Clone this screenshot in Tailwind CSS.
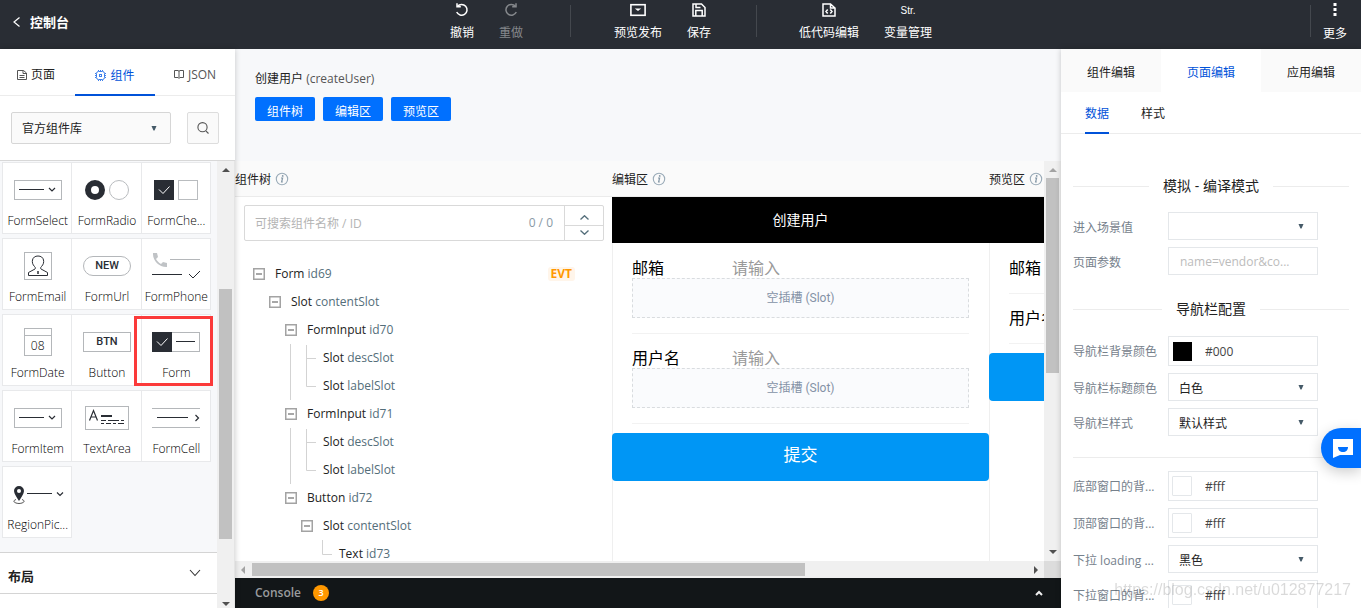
<!DOCTYPE html>
<html lang="zh-CN">
<head>
<meta charset="utf-8">
<meta name="viewport" content="width=device-width, initial-scale=1">
<title>控制台</title>
<script src="https://cdn.jsdelivr.net/npm/@tailwindcss/browser@4"></script>
</head>
<body class="flex h-screen flex-col overflow-hidden bg-white font-['Open_Sans','Noto_Sans_CJK_SC',sans-serif] text-[12px] leading-4 text-[#222]">

<svg class="hidden" aria-hidden="true">
  <symbol id="info" viewBox="0 0 14 14"><circle cx="7" cy="7" r="5.7" fill="none" stroke="#9aabb8" stroke-width="1.1"/><path d="M6 6h1.6l-1 4h1.2" fill="none" stroke="#8497a6" stroke-width="1.2"/><circle cx="7.7" cy="3.9" r=".9" fill="#8497a6"/></symbol>
  <symbol id="minus" viewBox="0 0 12 12"><rect x=".75" y=".75" width="10.5" height="10.5" fill="none" stroke="#a3a3a3" stroke-width="1.5"/><path d="M3 6h6" stroke="#777" stroke-width="1.3"/></symbol>
  <symbol id="tee" viewBox="0 0 10 28"><path d="M.5 1v27M.5 14.5H10" fill="none" stroke="#d3d3d3"/></symbol>
  <symbol id="ell" viewBox="0 0 10 28"><path d="M.5 0v14.500H10" fill="none" stroke="#d3d3d3"/></symbol>
  <symbol id="caret" viewBox="0 0 6 5"><path d="M.5 0h5L3.500 4.500h-1z" fill="#455a68"/></symbol>
  <symbol id="up" viewBox="0 0 8 4"><path d="M0 4L4 0l4 4z" fill="currentColor"/></symbol>
  <symbol id="down" viewBox="0 0 8 4"><path d="M0 0h8L4 4z" fill="currentColor"/></symbol>
  <symbol id="pick" viewBox="0 0 48 20"><rect x=".5" y=".5" width="47" height="19" fill="#fff" stroke="#b4b7ba"/><path d="M5 9.500h25" stroke="#292d34"/><path d="M35 8l3 3 3-3" fill="none" stroke="#292d34" stroke-width="1.2"/></symbol>
</svg>

<header class="flex h-[49px] shrink-0 items-start bg-[#292d34] text-white">
  <a href="#" class="flex w-[450px] items-center gap-[10px] pt-[14px] pl-[13px] text-[13px] font-bold">
    <svg class="h-[10px] w-[7px]" viewBox="0 0 7 10" fill="none" stroke="#fff" stroke-width="1.2"><path d="M6.500 .5L1 5l5.500 4.500"/></svg>控制台</a>
  <nav class="flex gap-[25px] pt-[3px]" aria-label="工具栏">
    <button class="flex flex-col items-center gap-2">
      <svg class="h-[14px] w-[16px]" viewBox="0 0 16 14" fill="none" stroke="#fff" stroke-width="1.5"><path d="M3.500 3.300A5.400 5.400 0 1 1 2.700 9"/><path d="M3 .3v3.500h3.800"/></svg>撤销</button>
    <button class="flex flex-col items-center gap-2 text-[#85888c]">
      <svg class="h-[14px] w-[16px]" viewBox="0 0 16 14" fill="none" stroke="currentColor" stroke-width="1.5"><path d="M12.500 3.300A5.400 5.400 0 1 0 13.300 9"/><path d="M13 .3v3.500H9.200"/></svg>重做</button>
    <span class="mt-[2px] mr-[18px] ml-[22px] h-8 w-px bg-[#44484e]"></span>
    <button class="flex flex-col items-center gap-2">
      <svg class="h-[14px] w-[16px]" viewBox="0 0 16 14" fill="none" stroke="#fff" stroke-width="1.600"><rect x=".9" y="1.700" width="14.200" height="10.600"/><path d="M4.800 5.500l3.200 2.600 3.200-2.600z" fill="#fff" stroke="none"/></svg>预览发布</button>
    <button class="flex flex-col items-center gap-2">
      <svg class="h-[14px] w-[14px]" viewBox="0 0 14 14" fill="none" stroke="#fff" stroke-width="1.500"><path d="M1 1h8.500L13 4.500V13H1zM3.800 13V7.500h6.400V13M4 1v3.500h4.500"/></svg>保存</button>
    <span class="mt-[2px] mr-[17px] ml-5 h-8 w-px bg-[#44484e]"></span>
    <button class="flex flex-col items-center gap-2">
      <svg class="h-[14px] w-[14px]" viewBox="0 0 14 14" fill="none" stroke="#fff" stroke-width="1.500"><path d="M1 1h7.500L13 5v8H1zM8.500 1v4H13M5.700 6.500L4 8.500l1.700 2M8.300 6.500l1.700 2-1.700 2"/></svg>低代码编辑</button>
    <button class="flex flex-col items-center gap-2"><span class="h-[14px] font-['Liberation_Sans',sans-serif] text-[10px]">Str.</span>变量管理</button>
  </nav>
  <div class="ml-auto flex gap-[12px] pr-[14px]">
    <span class="mt-[5px] h-8 w-px bg-[#44484e]"></span>
    <button class="flex flex-col items-center gap-[9px] pt-[3px]">
      <svg class="h-[14px] w-1" viewBox="0 0 4 14" fill="#fff"><rect x=".5" y="0" width="3" height="3"/><rect x=".5" y="5" width="3" height="3"/><rect x=".5" y="10" width="3" height="3"/></svg>更多</button>
  </div>
</header>

<div class="flex min-h-0 flex-1">
  <!-- Component library -->
  <aside class="z-10 flex w-[235px] shrink-0 flex-col bg-white shadow-[0_0_6px_rgba(0,0,0,0.2)]">
    <div class="flex h-[47px] shrink-0 border-b border-[#ececec]" role="tablist">
      <button role="tab" class="flex w-[75px] items-center justify-center gap-1 pt-[6px] pr-[3px]">
        <svg class="h-[10px] w-[10px]" viewBox="0 0 10 10" fill="none" stroke="#555"><path d="M.5.5H6.500L9.500 3v6.500h-9zM6 .5v3h3.500M2.500 5.500h5M2.500 7.500h5"/></svg>页面</button>
      <button role="tab" aria-selected="true" class="-mb-px flex w-20 items-center justify-center gap-1 border-b-2 border-[#0052d9] pt-[8px] text-[#0052d9]">
        <svg class="h-[11px] w-[11px]" viewBox="0 0 11 11" fill="none" stroke="#3f80ea"><rect x="1.500" y="1.500" width="8" height="8" rx="2"/><rect x="4.500" y="4.500" width="2" height="2"/><path d="M3.500 0v1M5.500 0v1M7.500 0v1M3.500 10v1M5.500 10v1M7.500 10v1M0 3.500h1M0 5.500h1M0 7.500h1M10 3.500h1M10 5.500h1M10 7.500h1"/></svg>组件</button>
      <button role="tab" class="flex w-20 items-center justify-center gap-1 pt-[5px] text-[#555]">
        <svg class="h-[9px] w-[10px]" viewBox="0 0 10 9" fill="none" stroke="#555"><path d="M.5.5H4l1 .7 1-.7h3.500v7H6l-1 1-1-1H.5zM5 1v7"/></svg>JSON</button>
    </div>
    <div class="flex h-[65px] shrink-0 gap-4 border-b border-[#d8d8d8] px-[11px] pt-4 pr-4">
      <div class="relative h-8 flex-1">
        <select aria-label="组件库" class="h-8 w-full appearance-none rounded-[2px] border border-[#d6d6d6] bg-[#fafafa] px-[10px] pt-[2px]"><option>官方组件库</option></select>
        <svg class="pointer-events-none absolute top-[14px] right-[14px] h-[5px] w-[6px]"><use href="#caret"/></svg>
      </div>
      <button aria-label="搜索" class="flex h-8 w-8 items-center justify-center rounded-[2px] border border-[#ddd] bg-[#fafafa]">
        <svg class="h-3 w-3" viewBox="0 0 12 12" fill="none" stroke="#555" stroke-width="1.100"><circle cx="5.500" cy="5.200" r="4.600"/><path d="M8.800 8.800l2.700 2.700"/></svg></button>
    </div>
    <div class="flex min-h-0 flex-1">
      <div class="flex-1 overflow-hidden bg-[#f7f8fa]">
        <div class="grid grid-cols-3 gap-y-1 pt-px pr-[7px] pl-[2px] pb-[14px] text-center font-light text-black">
          <button class="-mr-px flex h-[72px] flex-col items-center border border-[#e8e9eb] bg-white pt-[17px] pl-px"><svg class="h-5 w-12"><use href="#pick"/></svg><span class="mt-[13px]">FormSelect</span></button>
          <button class="-mr-px flex h-[72px] flex-col items-center border border-[#e8e9eb] bg-white pt-[17px] pl-px"><svg class="h-5 w-11" viewBox="0 0 44 20" fill="none"><circle cx="10" cy="10" r="7" stroke="#292d34" stroke-width="6"/><circle cx="34" cy="10" r="9.500" stroke="#b9bcbf"/></svg><span class="mt-[13px]">FormRadio</span></button>
          <button class="-mr-px flex h-[72px] flex-col items-center border border-[#e8e9eb] bg-white pt-[17px] pl-px"><svg class="h-5 w-11" viewBox="0 0 44 20" fill="none"><path d="M0 0h20v20H0z" fill="#292d34"/><path d="M5 9.500l4 4 6.500-7" stroke="#fff"/><rect x="24.500" y=".5" width="19" height="19" stroke="#b9bcbf"/></svg><span class="mt-[13px]">FormChe...</span></button>

          <button class="-mr-px flex h-[72px] flex-col items-center border border-[#e8e9eb] bg-white pt-[13px] pl-px"><svg class="h-7 w-7" viewBox="0 0 28 28" fill="none" stroke="#292d34"><rect x=".5" y=".5" width="27" height="27" stroke="#b4b7ba"/><path d="M4.500 23.500v-3l6.500-3.500c.8-.8.300-1.700-.5-2.500C8.500 12.500 8 10 8.500 8c.5-2.500 2.500-4 5.500-4s5 1.500 5.500 4c.5 2 0 4.500-2 6.500-.8.8-1.300 1.700-.5 2.500l6.500 3.500v3z"/><path d="M14 19v3" stroke-width="1.500"/></svg><span class="mt-[9px]">FormEmail</span></button>
          <button class="-mr-px flex h-[72px] flex-col items-center border border-[#e8e9eb] bg-white pt-[17px] pl-px"><span class="flex h-5 w-12 items-center justify-center rounded-full border border-[#b4b7ba] font-['Roboto',sans-serif] text-[11px] font-medium text-[#292d34]">NEW</span><span class="mt-[13px]">FormUrl</span></button>
          <button class="-mr-px flex h-[72px] flex-col items-center border border-[#e8e9eb] bg-white pt-[14px] pl-px"><svg class="h-[26px] w-12" viewBox="0 0 48 26" fill="none"><path d="M1 0h4l1 4-2 2c1.300 2.300 2.700 3.700 5 5l2-2 4 1v4C7.500 14.500.5 8 1 0z" fill="#c0c3c6"/><path d="M18 6.500h30" stroke="#b4b7ba"/><path d="M0 21.500h30M37 21l4 4 7-7" stroke="#292d34"/></svg><span class="mt-[10px]">FormPhone</span></button>

          <button class="-mr-px flex h-[72px] flex-col items-center border border-[#e8e9eb] bg-white pt-[13px] pl-px"><span class="flex h-7 w-7 flex-col border border-[#b4b7ba]"><span class="h-[7px] border-b border-[#b4b7ba]"></span><span class="pt-[2px]">08</span></span><span class="mt-[9px]">FormDate</span></button>
          <button class="-mr-px flex h-[72px] flex-col items-center border border-[#e8e9eb] bg-white pt-[17px] pl-px"><span class="flex h-5 w-12 items-center justify-center border border-[#b4b7ba] font-['Roboto',sans-serif] text-[11px] font-medium text-[#292d34]">BTN</span><span class="mt-[13px]">Button</span></button>
          <button class="relative -mr-px flex h-[72px] flex-col items-center border border-[#e8e9eb] bg-white pt-[17px] pl-px"><svg class="h-5 w-12" viewBox="0 0 48 20" fill="none"><rect x=".5" y=".5" width="47" height="19" stroke="#b4b7ba"/><path d="M0 0h20v20H0z" fill="#292d34"/><path d="M5 9.500l4 4 6.500-7" stroke="#fff"/><path d="M24 9.500h19" stroke="#292d34"/></svg><span class="mt-[13px]">Form</span><span class="absolute top-px -right-[3px] h-[70px] w-[79px] border-3 border-[#fb3a3a]"></span></button>

          <button class="-mr-px flex h-[72px] flex-col items-center border border-[#e8e9eb] bg-white pt-[17px] pl-px"><svg class="h-5 w-12"><use href="#pick"/></svg><span class="mt-[13px]">FormItem</span></button>
          <button class="-mr-px flex h-[72px] flex-col items-center border border-[#e8e9eb] bg-white pt-[15px] pl-px"><svg class="h-6 w-11" viewBox="0 0 44 24" fill="none" stroke="#292d34"><rect x=".5" y=".5" width="43" height="23" stroke="#b4b7ba"/><path d="M4.500 14.500l4-10 4 10M6 11h5" stroke-width="1.200"/><path d="M16 10h11" stroke-width="2"/><path d="M16 14.500h5m2 0h11m2 0h3M16 17.500h3m2 0h5m2 0h3m2 0h6"/></svg><span class="mt-[11px]">TextArea</span></button>
          <button class="-mr-px flex h-[72px] flex-col items-center border border-[#e8e9eb] bg-white pt-[17px] pl-px"><svg class="h-5 w-12" viewBox="0 0 48 20" fill="none"><path d="M0 .5h48M0 19.500h48" stroke="#b4b7ba"/><path d="M5 9.500h31" stroke="#292d34"/><path d="M43.500 7l3 3-3 3" stroke="#292d34" stroke-width="1.200"/></svg><span class="mt-[13px]">FormCell</span></button>

          <button class="-mr-px flex h-[72px] flex-col items-center border border-[#e8e9eb] bg-white pt-[18px] pl-px"><svg class="h-5 w-[52px]" viewBox="0 0 52 20" fill="none"><path d="M7 1a5 5 0 0 0-5 5c0 3 3 6.500 5 10 2-3.500 5-7 5-10a5 5 0 0 0-5-5z" fill="#292d34"/><circle cx="7" cy="6" r="2" fill="#fff"/><path d="M4 14.500c-5 2 0 4 3 4s8-2 3-4" stroke="#555"/><path d="M15 8.500h25" stroke="#292d34"/><path d="M45 7.500l3 3 3-3" stroke="#292d34" stroke-width="1.200"/></svg><span class="mt-[12px]">RegionPic...</span></button>
        </div>
        <button class="flex h-[42px] w-full items-center justify-between border-y border-[#d4d4d4] bg-white px-2 pt-[5px] text-[13px] font-bold">布局
          <svg class="mr-2 mb-[6px] h-2 w-3" viewBox="0 0 12 8" fill="none" stroke="#333" stroke-width="1.100"><path d="M1 1l5 5.500L11 1"/></svg></button>
        <div class="h-5 bg-white"></div>
      </div>
      <div class="flex w-[17px] flex-col items-center bg-[#f0f0f0] text-[#505050]">
        <svg class="mt-[7px] h-1 w-2 shrink-0"><use href="#up"/></svg>
        <span class="mt-[117px] h-[250px] w-[13px] bg-[#c1c1c1]"></span>
        <svg class="mt-auto mb-[2px] h-1 w-2"><use href="#down"/></svg>
      </div>
      <div class="w-px bg-[#e4e4e4]"></div>
    </div>
  </aside>

  <!-- Workspace -->
  <main class="flex min-w-0 flex-1 flex-col bg-[#f7f8fa]">
    <div class="h-28 shrink-0 pt-[22px] pl-5">
      <h1>创建用户 <span class="text-[#555]">(createUser)</span></h1>
      <div class="mt-[10px] flex gap-2 text-white">
        <button class="h-6 rounded-[2px] bg-[#0070ff] px-3 pt-[5px]">组件树</button>
        <button class="h-6 rounded-[2px] bg-[#0070ff] px-3 pt-[5px]">编辑区</button>
        <button class="h-6 rounded-[2px] bg-[#0070ff] px-3 pt-[5px]">预览区</button>
      </div>
    </div>
    <div class="flex min-h-0 flex-1">
      <div class="flex min-w-0 flex-1 overflow-hidden bg-white">
        <section class="w-[377px] shrink-0">
          <h2 class="flex h-9 items-center gap-1 border-b border-[#ebebeb] bg-[#fafafa] pt-[2px]">组件树 <svg class="mb-[2px] h-[14px] w-[14px]"><use href="#info"/></svg></h2>
          <div class="mt-2 mr-2 ml-[9px] flex h-9 rounded-[2px] border border-[#d9d9d9]">
            <input aria-label="搜索组件" placeholder="可搜索组件名称 / ID" class="min-w-0 flex-1 pt-px pl-[10px] outline-none placeholder:text-[#b4b4b4]">
            <span class="flex items-center pr-[11px] text-[#8a9aa6]">0 / 0</span>
            <div class="flex w-[39px] flex-col divide-y divide-[#d9d9d9] border-l border-[#d9d9d9]">
              <button aria-label="上一个" class="flex flex-1 items-center justify-center pt-1"><svg class="h-[5px] w-[9px]" viewBox="0 0 9 5" fill="none" stroke="#546e7a" stroke-width="1.300"><path d="M.5 4.500l4-3.800 4 3.800"/></svg></button>
              <button aria-label="下一个" class="flex flex-1 items-center justify-center"><svg class="h-[5px] w-[9px]" viewBox="0 0 9 5" fill="none" stroke="#546e7a" stroke-width="1.300"><path d="M.5.5l4 3.800 4-3.800"/></svg></button>
            </div>
          </div>
          <ul class="pt-[19px] pl-[18px] leading-7">
            <li>
              <div class="flex items-center gap-[10px]"><svg class="h-3 w-3"><use href="#minus"/></svg><span>Form <span class="text-[#546e7a]">id69</span></span><span class="mr-[37px] ml-auto rounded-[3px] bg-[#fff5ea] px-[3px] text-[12px] leading-[14px] font-bold text-[#ff9800]">EVT</span></div>
              <ul class="pl-4">
                <li>
                  <div class="flex items-center gap-[10px]"><svg class="h-3 w-3"><use href="#minus"/></svg><span>Slot <span class="text-[#546e7a]">contentSlot</span></span></div>
                  <ul class="pl-4">
                    <li>
                      <div class="flex items-center gap-[10px]"><svg class="h-3 w-3"><use href="#minus"/></svg><span>FormInput <span class="text-[#546e7a]">id70</span></span></div>
                      <ul class="ml-[5px] border-l border-[#d3d3d3] pl-[15px]">
                        <li class="flex gap-[7px]"><svg class="h-7 w-[10px]"><use href="#tee"/></svg><span>Slot <span class="text-[#546e7a]">descSlot</span></span></li>
                        <li class="flex gap-[7px]"><svg class="h-7 w-[10px]"><use href="#ell"/></svg><span>Slot <span class="text-[#546e7a]">labelSlot</span></span></li>
                      </ul>
                    </li>
                    <li>
                      <div class="flex items-center gap-[10px]"><svg class="h-3 w-3"><use href="#minus"/></svg><span>FormInput <span class="text-[#546e7a]">id71</span></span></div>
                      <ul class="ml-[5px] border-l border-[#d3d3d3] pl-[15px]">
                        <li class="flex gap-[7px]"><svg class="h-7 w-[10px]"><use href="#tee"/></svg><span>Slot <span class="text-[#546e7a]">descSlot</span></span></li>
                        <li class="flex gap-[7px]"><svg class="h-7 w-[10px]"><use href="#ell"/></svg><span>Slot <span class="text-[#546e7a]">labelSlot</span></span></li>
                      </ul>
                    </li>
                    <li>
                      <div class="flex items-center gap-[10px]"><svg class="h-3 w-3"><use href="#minus"/></svg><span>Button <span class="text-[#546e7a]">id72</span></span></div>
                      <ul class="pl-4">
                        <li>
                          <div class="flex items-center gap-[10px]"><svg class="h-3 w-3"><use href="#minus"/></svg><span>Slot <span class="text-[#546e7a]">contentSlot</span></span></div>
                          <ul class="pl-[21px]">
                            <li class="flex gap-[7px]"><svg class="h-7 w-[10px]"><use href="#ell"/></svg><span>Text <span class="text-[#546e7a]">id73</span></span></li>
                          </ul>
                        </li>
                      </ul>
                    </li>
                  </ul>
                </li>
              </ul>
            </li>
          </ul>
        </section>

        <section class="w-[377px] shrink-0">
          <h2 class="flex h-9 items-center gap-1 border-b border-[#ebebeb] bg-[#fafafa] pt-[2px]">编辑区 <svg class="mb-[2px] h-[14px] w-[14px]"><use href="#info"/></svg></h2>
          <div class="flex h-[46px] items-center justify-center bg-black text-[14px] text-white">创建用户</div>
          <div class="h-full border-l border-[#efefef]">
            <div class="-ml-px px-5 pt-[15px]">
              <label class="flex h-5 items-center text-[16px] text-black"><span class="w-[100px]">邮箱</span><input placeholder="请输入" class="min-w-0 flex-1 outline-none placeholder:text-[#999]"></label>
              <div class="flex h-10 items-center justify-center border border-dashed border-[#d9dcdf] bg-[#fafbfd] font-['Roboto','Noto_Sans_CJK_SC',sans-serif] text-[#8492a6]">空插槽 (Slot)</div>
              <div class="mt-[15px] mb-[14px] h-px bg-[#f2f2f2]"></div>
              <label class="flex h-5 items-center text-[16px] text-black"><span class="w-[100px]">用户名</span><input placeholder="请输入" class="min-w-0 flex-1 outline-none placeholder:text-[#999]"></label>
              <div class="flex h-10 items-center justify-center border border-dashed border-[#d9dcdf] bg-[#fafbfd] font-['Roboto','Noto_Sans_CJK_SC',sans-serif] text-[#8492a6]">空插槽 (Slot)</div>
              <div class="mt-[15px] mb-[9px] h-px bg-[#f2f2f2]"></div>
            </div>
            <button class="-ml-px h-12 w-[377px] rounded-[4px] bg-[#0096f5] pb-1 text-[17px] text-white">提交</button>
          </div>
        </section>

        <section class="w-[377px] shrink-0">
          <h2 class="flex h-9 items-center gap-1 border-b border-[#ebebeb] bg-[#fafafa] pt-[2px]">预览区 <svg class="mb-[2px] h-[14px] w-[14px]"><use href="#info"/></svg></h2>
          <div class="flex h-[46px] items-center justify-center bg-black text-[14px] text-white">创建用户</div>
          <div class="h-full border-l border-[#efefef]">
            <div class="-ml-px px-5 pt-[15px]">
              <label class="flex h-5 items-center text-[16px] text-black"><span class="w-[100px]">邮箱</span><input placeholder="请输入" class="min-w-0 flex-1 outline-none placeholder:text-[#999]"></label>
              <div class="mt-[15px] mb-[14px] h-px bg-[#f2f2f2]"></div>
              <label class="flex h-5 items-center text-[16px] text-black"><span class="w-[100px]">用户名</span><input placeholder="请输入" class="min-w-0 flex-1 outline-none placeholder:text-[#999]"></label>
              <div class="mt-[15px] mb-[9px] h-px bg-[#f2f2f2]"></div>
            </div>
            <button class="-ml-px h-12 w-[377px] rounded-[4px] bg-[#0096f5] pb-1 text-[17px] text-white">提交</button>
          </div>
        </section>
      </div>
      <div class="flex w-[17px] shrink-0 flex-col items-center bg-[#f0f0f0]">
        <svg class="mt-[7px] h-1 w-2 shrink-0 text-[#a3a3a3]"><use href="#up"/></svg>
        <span class="mt-[6px] h-[195px] w-[13px] bg-[#c1c1c1]"></span>
        <svg class="mt-auto mb-[7px] h-1 w-2 text-[#505050]"><use href="#down"/></svg>
      </div>
    </div>
    <div class="flex h-[17px] shrink-0 items-center bg-[#f0f0f0]">
      <svg class="mr-[7px] ml-[6px] h-2 w-1" viewBox="0 0 4 8"><path d="M4 0v8L0 4z" fill="#a3a3a3"/></svg>
      <span class="h-[13px] w-[67%] bg-[#c1c1c1]"></span>
      <svg class="mr-[6px] ml-auto h-2 w-1" viewBox="0 0 4 8"><path d="M0 0l4 4-4 4z" fill="#505050"/></svg>
      <span class="h-full w-[17px] bg-[#dcdcdc]"></span>
    </div>
    <button class="flex h-[30px] shrink-0 items-center bg-[#121618] px-5 font-semibold text-[#9a9c9e]">Console
      <span class="ml-3 flex h-4 w-4 items-center justify-center rounded-full bg-[#ff9800] text-[9px] text-white">3</span>
      <svg class="mr-[-2px] ml-auto h-[6px] w-2" viewBox="0 0 8 6" fill="none" stroke="#eee" stroke-width="2"><path d="M1 5l3-3 3 3"/></svg></button>
  </main>

  <!-- Page properties -->
  <aside class="z-10 w-[300px] shrink-0 overflow-hidden bg-white shadow-[0_0_6px_rgba(0,0,0,0.2)]">
    <div class="grid h-[43px] grid-cols-3 bg-[#fafafa]" role="tablist">
      <button role="tab" class="pt-[5px]">组件编辑</button>
      <button role="tab" aria-selected="true" class="bg-white pt-[5px] text-[#0052d9]">页面编辑</button>
      <button role="tab" class="pt-[5px]">应用编辑</button>
    </div>
    <div class="flex h-[42px] gap-8 border-b border-[#ececec] pl-6" role="tablist">
      <button role="tab" aria-selected="true" class="-mb-px border-b-2 border-[#0052d9] pt-1 text-[#0052d9]">数据</button>
      <button role="tab" class="pt-[3px]">样式</button>
    </div>
    <form class="px-3 pt-[42px] text-[#222]">
      <h3 class="flex h-5 items-center gap-[14px] text-[14px] before:h-px before:flex-1 before:bg-[#ececec] after:h-px after:flex-1 after:bg-[#ececec]">模拟 - 编译模式</h3>
      <div class="mt-4 flex flex-col gap-[7px] pr-[31px]">
        <div class="flex items-center"><label for="scene" class="w-[95px] pt-[3px] text-[#76818c]">进入场景值</label>
          <div class="relative flex-1"><select id="scene" class="block h-7 w-full appearance-none border border-[#e4e7ea] px-[10px]"><option></option></select><svg class="pointer-events-none absolute top-3 right-[14px] h-[5px] w-[6px]"><use href="#caret"/></svg></div></div>
        <div class="flex items-center"><label for="params" class="w-[95px] pt-[3px] text-[#76818c]">页面参数</label>
          <input id="params" placeholder="name=vendor&amp;co..." class="h-7 min-w-0 flex-1 border border-[#e4e7ea] px-[11px] pt-px placeholder:text-[#bcbcbc]"></div>
      </div>
      <h3 class="mt-6 flex h-5 items-center gap-[14px] text-[14px] before:h-px before:flex-1 before:bg-[#ececec] after:h-px after:flex-1 after:bg-[#ececec]">导航栏配置</h3>
      <div class="mt-[17px] flex flex-col gap-[7px] pr-[31px]">
        <div class="flex items-center"><label for="navbg" class="w-[95px] pt-[2px] text-[#76818c]">导航栏背景颜色</label>
          <div class="flex h-[30px] flex-1 items-center border border-[#e4e7ea] pl-1"><span class="h-[19px] w-[19px] bg-black"></span><input id="navbg" value="#000" class="w-20 pt-px pl-[13px] text-[#444]"></div></div>
        <div class="flex items-center"><label for="navtitle" class="w-[95px] pt-[3px] text-[#76818c]">导航栏标题颜色</label>
          <div class="relative flex-1"><select id="navtitle" class="block h-7 w-full appearance-none border border-[#e4e7ea] px-[10px] pt-1"><option>白色</option></select><svg class="pointer-events-none absolute top-3 right-[14px] h-[5px] w-[6px]"><use href="#caret"/></svg></div></div>
        <div class="flex items-center"><label for="navstyle" class="w-[95px] pt-[3px] text-[#76818c]">导航栏样式</label>
          <div class="relative flex-1"><select id="navstyle" class="block h-7 w-full appearance-none border border-[#e4e7ea] px-[10px] pt-1"><option>默认样式</option></select><svg class="pointer-events-none absolute top-3 right-[14px] h-[5px] w-[6px]"><use href="#caret"/></svg></div></div>
      </div>
      <hr class="mt-[21px] mb-[13px] border-[#ececec]">
      <div class="flex flex-col gap-[7px] pr-[31px]">
        <div class="flex items-center"><label for="bottombg" class="w-[95px] pt-[2px] text-[#76818c]">底部窗口的背...</label>
          <div class="flex h-[30px] flex-1 items-center border border-[#e4e7ea] pl-[3px]"><span class="h-5 w-5 rounded-[1px] border border-[#e4e7ea]"></span><input id="bottombg" value="#fff" class="w-20 pt-px pl-[13px] text-[#444]"></div></div>
        <div class="flex items-center"><label for="topbg" class="w-[95px] pt-[2px] text-[#76818c]">顶部窗口的背...</label>
          <div class="flex h-[30px] flex-1 items-center border border-[#e4e7ea] pl-[3px]"><span class="h-5 w-5 rounded-[1px] border border-[#e4e7ea]"></span><input id="topbg" value="#fff" class="w-20 pt-px pl-[13px] text-[#444]"></div></div>
        <div class="flex items-center"><label for="loading" class="w-[95px] pt-[3px] text-[#76818c]">下拉 loading ...</label>
          <div class="relative flex-1"><select id="loading" class="block h-7 w-full appearance-none border border-[#e4e7ea] px-[10px] pt-1"><option>黑色</option></select><svg class="pointer-events-none absolute top-3 right-[14px] h-[5px] w-[6px]"><use href="#caret"/></svg></div></div>
        <div class="flex items-center"><label for="pullbg" class="w-[95px] pt-[2px] text-[#76818c]">下拉窗口的背...</label>
          <div class="flex h-[30px] flex-1 items-center border border-[#e4e7ea] pl-[3px]"><span class="h-5 w-5 rounded-[1px] border border-[#e4e7ea]"></span><input id="pullbg" value="#fff" class="w-20 pt-px pl-[13px] text-[#444]"></div></div>
      </div>
    </form>
  </aside>
</div>

<button aria-label="在线客服" class="fixed right-0 bottom-[140px] z-20 flex h-10 w-10 items-center rounded-l-full bg-[#0070ff] pl-3 shadow-[0_4px_14px_rgba(0,0,0,0.2)]">
  <svg class="h-[19px] w-5" viewBox="0 0 20 19"><path d="M0 0h20v16H7L0 19z" fill="#fff"/><path d="M5 8h10c0 3-2 5-5 5S5 11 5 8z" fill="#0070ff"/></svg></button>
<p class="pointer-events-none fixed right-[10px] bottom-[8px] z-20 font-['Liberation_Sans',sans-serif] text-[16px] leading-5 text-black/15">https://blog.csdn.net/u012877217</p>
</body>
</html>
